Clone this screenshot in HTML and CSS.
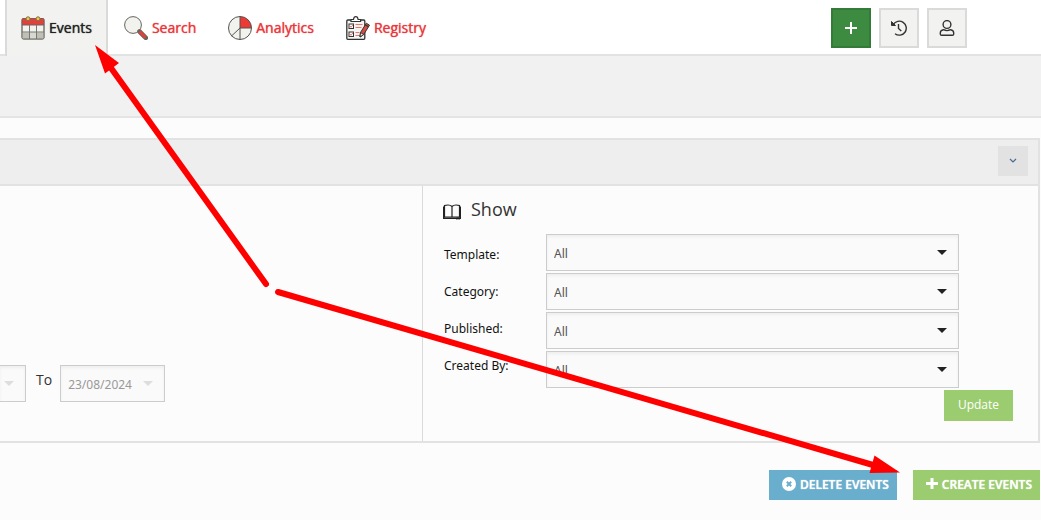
FILE: index.html
```html
<!DOCTYPE html>
<html lang="en">
<head>
    <meta charset="UTF-8">
    <meta name="viewport" content="width=device-width, initial-scale=1.0">
    <title>Events</title>
    <link rel="stylesheet" href="styles.css">
</head>
<body>
<header class="topbar">
    <nav class="tabs">
        <a href="#" class="tab active">
            <svg width="24" height="24" viewBox="0 0 24 24">
                <rect x="1" y="3" width="22" height="20" rx="1.5" fill="#f2f2ef" stroke="#77776f"/>
                <path d="M1.5 16.5h21v5.500q0 .5-.5.5h-20q-.5 0-.5-.5z" fill="#bfbfb8"/>
                <rect x="9" y="16" width="6" height="6.500" fill="#d8d8d2"/>
                <path d="M1 9V3.500Q1 2.500 2 2.500h20q1 0 1 1V9z" fill="#e2403a" stroke="#77605a"/>
                <path d="M1 16h22M8.500 9v14M15.500 9v14M1 9v12.500q0 1.500 1.500 1.500h19q1.500 0 1.500-1.500V9" fill="none" stroke="#77776f"/>
                <circle cx="7" cy="2.800" r="2" fill="#f4c63d" stroke="#77714e"/>
                <circle cx="17" cy="2.800" r="2" fill="#f4c63d" stroke="#77714e"/>
            </svg>
            <span>Events</span>
        </a>
        <a href="#" class="tab">
            <svg width="24" height="24" viewBox="0 0 24 24">
                <circle cx="9" cy="9" r="8.400" fill="#f2f2ef" stroke="#66665f"/>
                <path d="M15.500 15.500l6.300 6.300" stroke="#66665f" stroke-width="4.600" stroke-linecap="round"/>
                <path d="M15.500 15.500l6 6" stroke="#e2403a" stroke-width="3"/>
            </svg>
            <span>Search</span>
        </a>
        <a href="#" class="tab">
            <svg width="24" height="24" viewBox="0 0 24 24">
                <circle cx="12" cy="12" r="11.500" fill="#f2f2ef"/>
                <path d="M12 .5A11.500 11.500 0 0 1 23.500 12H12z" fill="#ee3a37"/>
                <path d="M12 .5v23M12 12h11.500M12 12l-8.500 8" fill="none" stroke="#55554f"/>
                <circle cx="12" cy="12" r="11.500" fill="none" stroke="#55554f"/>
            </svg>
            <span>Analytics</span>
        </a>
        <a href="#" class="tab">
            <svg width="24" height="24" viewBox="0 0 24 24">
                <rect x=".8" y="4" width="18" height="19.300" rx="1" fill="#f5f5f3" stroke="#333" stroke-width="1.300"/>
                <path d="M5 5.500V3.500h2.500Q7.800.7 9.800.7t2.300 2.800h2.500v2z" fill="#fff" stroke="#333" stroke-width="1.200"/>
                <rect x="3" y="8" width="4.500" height="4.500" fill="#fff" stroke="#333"/>
                <rect x="3" y="16" width="4.500" height="4.500" fill="#fff" stroke="#333"/>
                <path d="M4 10l1 1.300 2-2.500M4 18l1 1.300 2-2.500M9.500 8.500h7M9.500 11.500h6M9.500 16.500h4M9.500 19.500h5" fill="none" stroke="#ee7470"/>
                <path d="M14.500 16.500l5.800-9.300 3.200 2-5.800 9.300-3.700 2.500z" fill="#d94b40" stroke="#333"/>
                <path d="M14.500 16.500l3.200 2-3.700 2.500z" fill="#eee" stroke="#333"/>
                <path d="M19.300 8.800l3.200 2" stroke="#333" stroke-width="1.300"/>
            </svg>
            <span>Registry</span>
        </a>
    </nav>
    <div class="actions">
        <button type="button" class="square add" aria-label="Add">
            <svg width="14" height="14" viewBox="0 0 14 14"><path d="M7 1v12M1 7h12" stroke="#fff" stroke-width="2"/></svg>
        </button>
        <button type="button" class="square" aria-label="History">
            <svg width="16" height="16" viewBox="0 0 16 16" fill="none" stroke="#333">
                <path d="M2.300 4.500A7 7 0 1 1 4 13.700" stroke-width="1.400"/>
                <path d="M.5 1.500v4h4z" fill="#333"/>
                <path d="M7.500 4v4.500l2.800 2.500" stroke-width="1.400"/>
            </svg>
        </button>
        <button type="button" class="square" aria-label="Account">
            <svg width="16" height="16" viewBox="0 0 16 16" fill="none" stroke="#333" stroke-width="1.400">
                <circle cx="8" cy="4.500" r="3.900"/>
                <path d="M4.500 9.700Q1.300 10 1.300 13v1q0 1.300 1.300 1.300h10.800q1.300 0 1.300-1.300v-1q0-3-3.200-3.300Q8 11.500 4.500 9.700z"/>
            </svg>
        </button>
    </div>
</header>
<div class="subbar"></div>

<main class="content">
    <section class="panel">
        <div class="panel-head">
            <button type="button" class="toggle" aria-label="Collapse">
                <svg width="8" height="6" viewBox="0 0 8 6"><path d="M1 1l3 3 3-3" fill="none" stroke="#4a6a94" stroke-width="1.200"/></svg>
            </button>
        </div>
        <div class="panel-body">
            <div class="dates">
                <div class="select-box disabled from">
                    <select aria-label="From" disabled><option></option></select>
                </div>
                <label for="date_to">To</label>
                <div class="select-box disabled to">
                    <select id="date_to" disabled><option>23/08/2024</option></select>
                </div>
            </div>
            <form class="show">
                <h2>
                    <svg width="18" height="16" viewBox="0 0 18 16" fill="none" stroke="#222">
                        <path d="M9 2.500Q7.500 1 5 1T1.500 1.500V13H9M9 2.500Q10.500 1 13 1t3.500.5V13H9M9 2.500V13" stroke-width="1.200"/>
                        <path d="M.7 2.500v11.800h14M17.300 2.500v11.800h-3" stroke-width="1.400"/>
                        <path d="M13.500 13.500h3V16l-1.500-1-1.500 1z" fill="#222" stroke="none"/>
                    </svg>
                    Show
                </h2>
                <div class="filters">
                    <div class="labels">
                        <label for="template">Template:</label>
                        <label for="category">Category:</label>
                        <label for="published">Published:</label>
                        <label for="created_by">Created By:</label>
                    </div>
                    <div class="fields">
                        <div class="select-box"><select id="template"><option>All</option></select></div>
                        <div class="select-box"><select id="category"><option>All</option></select></div>
                        <div class="select-box"><select id="published"><option>All</option></select></div>
                        <div class="select-box"><select id="created_by"><option>All</option></select></div>
                    </div>
                </div>
                <button type="button" class="update">Update</button>
            </form>
        </div>
    </section>

    <div class="buttons">
        <button type="button" class="btn delete">
            <svg width="14" height="14" viewBox="0 0 14 14"><circle cx="7" cy="7" r="7" fill="#fff"/><path d="M4.800 4.800l4.400 4.400M9.200 4.800L4.800 9.200" stroke="#6aaecd" stroke-width="2"/></svg>
            DELETE EVENTS
        </button>
        <button type="button" class="btn create">
            <svg width="12" height="12" viewBox="0 0 12 12"><path d="M6 0v11M0 5.500h12" stroke="#fff" stroke-width="3"/></svg>
            CREATE EVENTS
        </button>
    </div>
</main>

<svg class="arrows" width="1041" height="520" viewBox="0 0 1041 520" aria-hidden="true">
    <path d="M266 284L111 68M278 292L873 465" stroke="#f00" stroke-width="6" stroke-linecap="round"/>
    <path d="M95 45l24 18-14 10.500zM900 472.500L874.500 455.500 869.500 473z" fill="#f00"/>
</svg>
</body>
</html>
```

FILE: styles.css
```css
* {
    box-sizing: border-box;
}
body {
    margin: 0;
    background: #fcfcfc;
    color: #333;
    font-family: "Open Sans", sans-serif;
    font-size: 14px;
    overflow-x: hidden;
}
button, select {
    font-family: inherit;
    border-radius: 0;
}
button {
    display: flex;
    align-items: center;
    justify-content: center;
    padding: 0;
    border: none;
    cursor: pointer;
}

/* top bar */
.topbar {
    display: flex;
    justify-content: space-between;
    height: 56px;
    padding-left: 5px;
    padding-right: 74px;
    background: #fff;
    border-bottom: 2px solid #e2e2e2;
}
.tabs {
    display: flex;
    height: 56px;
}
.tab {
    display: flex;
    align-items: center;
    gap: 4px;
    padding: 0 14px;
    border: 2px solid transparent;
    border-width: 0 2px;
    color: #e8383d;
    font-weight: 500;
    text-decoration: none;
    text-shadow: 0 0 1px currentColor;
}
.tab.active {
    background: #f2f2f0;
    border-color: #dadada;
    color: #222;
}
.tab span {
    padding-bottom: 2px;
}
.actions {
    display: flex;
    align-items: center;
    gap: 8px;
    padding-top: 2px;
}
.square {
    width: 40px;
    height: 40px;
    background: #f2f2f0;
    border: 2px solid #dadada;
}
.square.add {
    background: #3d8b41;
    border-color: #347a38;
}
.subbar {
    height: 62px;
    background: #f1f1f1;
    border-bottom: 2px solid #e4e4e4;
}

/* filter panel */
.content {
    padding: 20px 1px 20px 0;
}
.panel {
    border: 2px solid #e2e2e2;
    border-left: none;
}
.panel-head {
    display: flex;
    justify-content: flex-end;
    padding: 6px 10px 8px;
    background: #eee;
    border-bottom: 2px solid #e2e2e2;
}
.toggle {
    width: 30px;
    height: 30px;
    background: #e2e2e2;
}
.panel-body {
    display: grid;
    grid-template-columns: 423px 1fr;
}
.dates {
    display: flex;
    align-items: flex-end;
    padding-bottom: 39px;
    border-right: 1px solid #dadada;
}
.dates label {
    padding: 0 8px 0 10px;
    line-height: 44px;
}
.show {
    padding: 12px 25px 20px 20px;
}
.show h2 {
    display: flex;
    align-items: center;
    gap: 10px;
    margin: 0 0 14px;
    font-size: 18px;
    font-weight: 400;
    line-height: 22px;
}
.show h2 svg {
    margin-top: 6px;
}
.filters {
    display: flex;
    margin-right: 54px;
}
.labels {
    display: flex;
    flex-direction: column;
    gap: 19px;
    width: 103px;
    padding-top: 12px;
    padding-left: 1px;
    color: #111;
    font-family: "Noto Sans", sans-serif;
    font-size: 12px;
    line-height: 18px;
}
.fields {
    display: flex;
    flex: 1;
    flex-direction: column;
    gap: 2px;
}
.select-box {
    position: relative;
}
.select-box select {
    display: block;
    width: 100%;
    height: 37px;
    padding: 2px 7px 0;
    appearance: none;
    background: #fafafa;
    border: 1px solid #ccc;
    box-shadow: inset 0 2px 3px #eee;
    color: #555;
    font-family: "Noto Sans", sans-serif;
    font-size: 12px;
    opacity: 1;
}
.select-box::after {
    content: "";
    position: absolute;
    top: 16px;
    right: 12px;
    border: 5px solid transparent;
    border-top-color: #222;
    border-bottom: none;
    pointer-events: none;
}
.select-box.disabled select {
    color: #999;
}
.select-box.disabled::after {
    border-top-color: #ddd;
}
.from {
    width: 26px;
}
.from select {
    border-left: none;
}
.to {
    width: 105px;
}
.update {
    width: 69px;
    height: 31px;
    margin-top: 2px;
    margin-left: auto;
    padding-bottom: 2px;
    background: #9ccc70;
    color: #fff;
    font-size: 12px;
}

/* bottom buttons */
.buttons {
    display: flex;
    justify-content: flex-end;
    gap: 16px;
    margin-top: 27px;
}
.btn {
    gap: 4px;
    height: 30px;
    padding: 0 8px 2px 13px;
    color: #fff;
    font-size: 12px;
    font-weight: 600;
    text-shadow: 0 0 1px currentColor;
}
.delete {
    background: #6aaecd;
}
.create {
    background: #9ccc70;
}

/* arrows drawn over the page */
.arrows {
    position: absolute;
    top: 0;
    left: 0;
    pointer-events: none;
}
```
